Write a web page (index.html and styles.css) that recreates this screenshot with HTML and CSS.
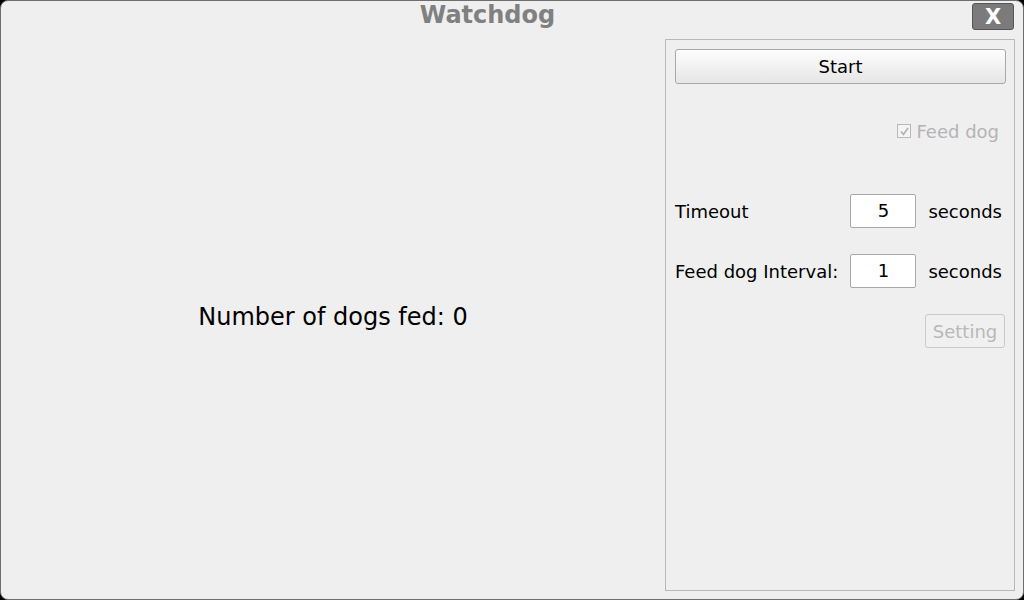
FILE: index.html
```html
<!DOCTYPE html>
<html>
<head>
<meta charset="utf-8">
<link rel="stylesheet" href="styles.css">
</head>
<body>
<div class="window">
  <div class="titlebar">
    <div class="title">Watchdog</div>
    <button class="close">X</button>
  </div>
  <div class="content">
    <div class="main">
      <div class="counter">Number of dogs fed: 0</div>
    </div>
    <div class="panel">
      <button class="btn start">Start</button>
      <div class="check-row">
        <span class="checkbox"><svg width="11" height="11" viewBox="0 0 11 11"><path d="M2 5.5 L4.5 8.5 L9 2" fill="none" stroke="#b0b0b0" stroke-width="1.6"/></svg></span>
        <span class="check-label">Feed dog</span>
      </div>
      <div class="field-row">
        <span class="field-label">Timeout</span>
        <span class="input">5</span>
        <span class="unit">seconds</span>
      </div>
      <div class="field-row">
        <span class="field-label">Feed dog Interval:</span>
        <span class="input">1</span>
        <span class="unit">seconds</span>
      </div>
      <div class="actions">
        <button class="btn setting" disabled>Setting</button>
      </div>
    </div>
  </div>
</div>
</body>
</html>
```
FILE: styles.css
```css
html, body {
  margin: 0;
  padding: 0;
  background: #000;
}
body {
  width: 1024px;
  height: 600px;
  font-family: "DejaVu Sans", "Liberation Sans", sans-serif;
}
.window {
  box-sizing: border-box;
  width: 1024px;
  height: 600px;
  background: #efefef;
  border: 1px solid #6e6e6e;
  border-radius: 8px;
  display: flex;
  flex-direction: column;
  overflow: hidden;
}
.titlebar {
  height: 38px;
  display: flex;
  align-items: flex-start;
  flex: none;
}
.title {
  flex: 1;
  text-align: center;
  font-weight: bold;
  font-size: 24px;
  line-height: 28px;
  color: #808080;
  padding-left: 2px;
}
.close {
  box-sizing: border-box;
  margin: 2px 9px 0 0;
  width: 42px;
  height: 27px;
  padding: 0;
  background: #7b7b7b;
  border: 1px solid #555;
  border-radius: 3px;
  color: #fff;
  font-family: "DejaVu Sans", sans-serif;
  font-weight: bold;
  font-size: 21px;
  line-height: 24px;
}
.content {
  flex: 1;
  display: flex;
  padding: 0 8px 8px 0;
}
.main {
  flex: 1;
  display: flex;
  align-items: center;
  justify-content: center;
  padding-top: 4px;
}
.counter {
  font-size: 24px;
  color: #000;
}
.panel {
  box-sizing: border-box;
  width: 350px;
  border: 1px solid #b8b8b8;
  padding: 9px 8px 0 9px;
  display: flex;
  flex-direction: column;
}
.btn {
  box-sizing: border-box;
  font-family: "DejaVu Sans", sans-serif;
  font-size: 18px;
  border-radius: 3px;
  padding: 0;
}
.start {
  height: 35px;
  width: 100%;
  color: #000;
  border: 1px solid #a8a8a8;
  background: linear-gradient(#fdfdfd, #e6e6e6);
}
.check-row {
  margin-top: 35px;
  height: 24px;
  display: flex;
  align-items: center;
  justify-content: flex-end;
  padding-right: 7px;
  color: #b4b4b4;
  font-size: 18px;
}
.checkbox {
  box-sizing: border-box;
  width: 14px;
  height: 14px;
  border: 1px solid #b8b8b8;
  background: #f4f4f4;
  display: flex;
  align-items: center;
  justify-content: center;
  margin-right: 5px;
}
.field-row {
  height: 34px;
  display: flex;
  align-items: center;
  font-size: 18px;
  color: #000;
  margin-top: 51px;
}
.field-row + .field-row {
  margin-top: 26px;
}
.field-label {
  flex: 1;
}
.input {
  box-sizing: border-box;
  width: 66px;
  height: 34px;
  background: #fff;
  border: 1px solid #a8a8a8;
  border-radius: 2px;
  text-align: center;
  line-height: 32px;
}
.unit {
  margin-left: 12px;
  padding-right: 4px;
}
.actions {
  margin-top: 26px;
  display: flex;
  justify-content: flex-end;
  padding-right: 1px;
}
.setting {
  width: 80px;
  height: 34px;
  color: #b8b8b8;
  background: #f0f0f0;
  border: 1px solid #cacaca;
}
```
